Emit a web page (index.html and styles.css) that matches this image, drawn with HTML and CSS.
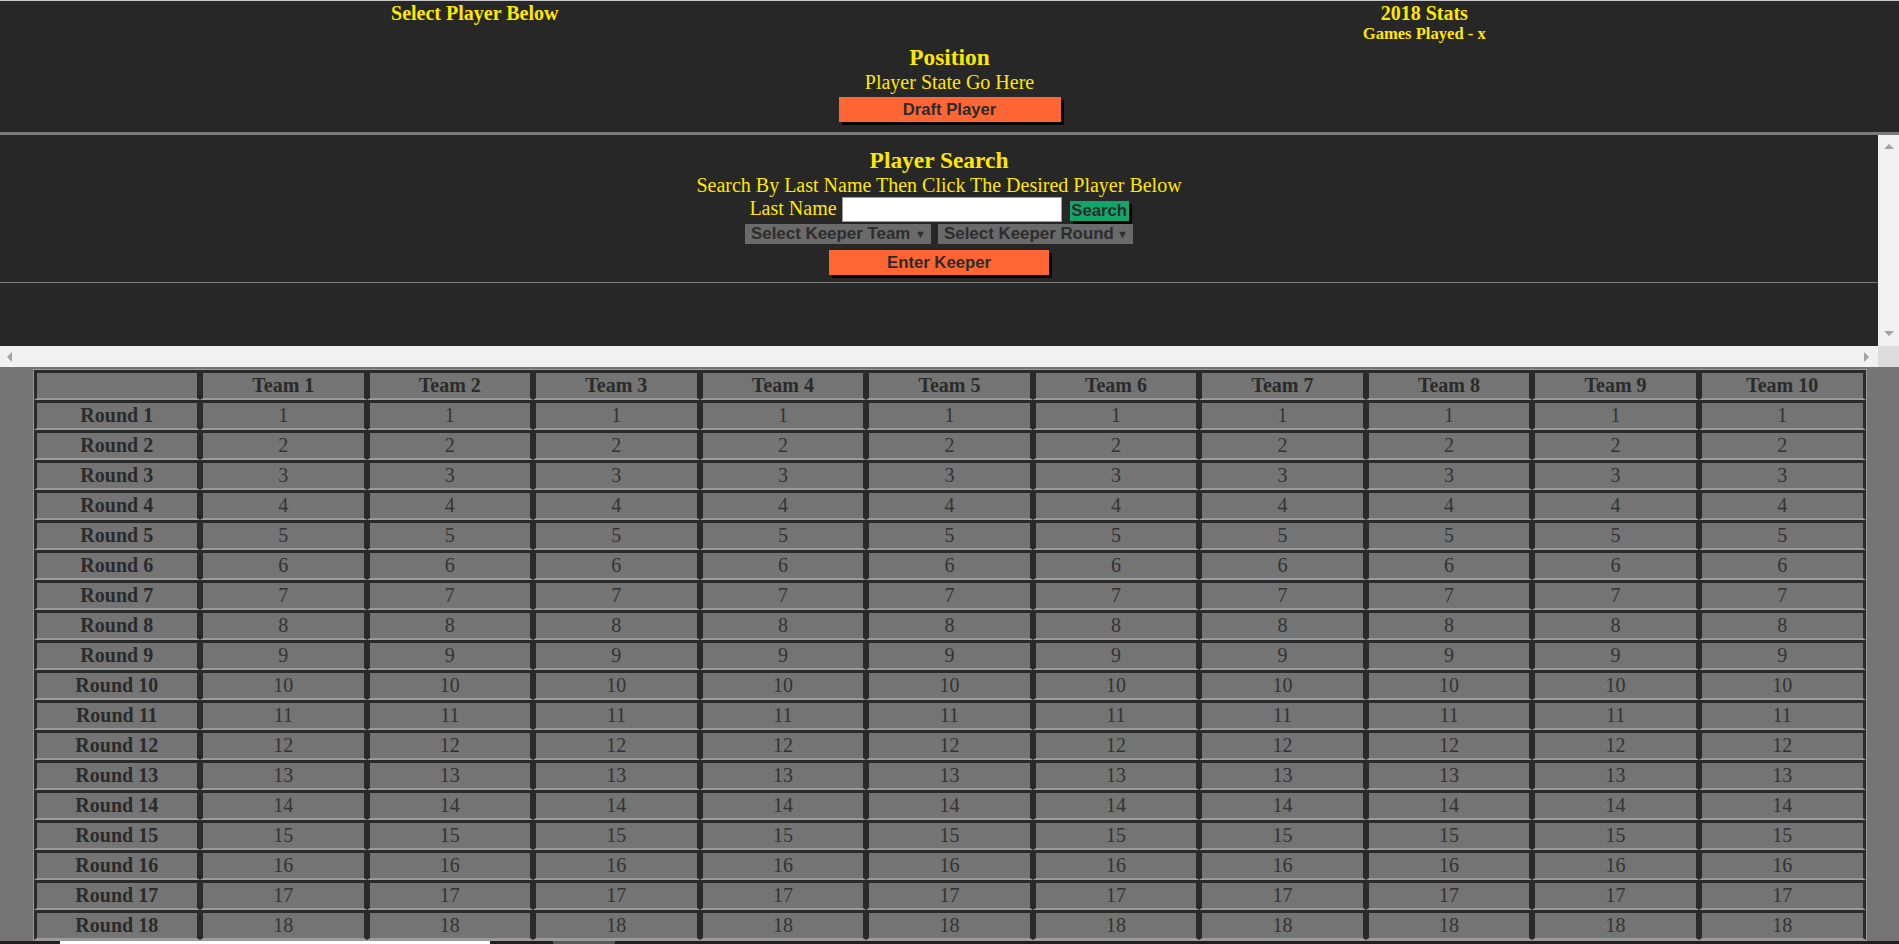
FILE: index.html
```html
<!DOCTYPE html>
<html>
<head>
<meta charset="utf-8">
<title>Draft</title>
<link rel="stylesheet" href="styles.css">
</head>
<body>
<div class="top">
  <div class="top-row">
    <div class="half"><div class="t-left">Select Player Below</div></div>
    <div class="half">
      <div class="stats">2018 Stats</div>
      <div class="games">Games Played - x</div>
    </div>
  </div>
  <div class="position">Position</div>
  <div class="state">Player State Go Here</div>
  <button class="btn btn-draft">Draft Player</button>
</div>

<div class="frame">
  <div class="frame-content">
    <div class="ps-title">Player Search</div>
    <div class="ps-sub">Search By Last Name Then Click The Desired Player Below</div>
    <div class="ps-row">
      <span class="ps-label">Last Name</span>
      <input class="ps-input" type="text">
      <button class="btn btn-search">Search</button>
    </div>
    <div class="sel-row">
      <div class="sel sel-team"><span>Select Keeper Team</span><span class="caret">&#9660;</span></div>
      <div class="sel sel-round"><span>Select Keeper Round</span><span class="caret">&#9660;</span></div>
    </div>
    <button class="btn btn-keeper">Enter Keeper</button>
    <div class="rule"></div>
  </div>
  <div class="vbar"><span class="arr arr-up"></span><span class="arr arr-down"></span></div>
  <div class="hbar"><span class="arr arr-left"></span><span class="arr arr-right"></span></div>
  <div class="corner"></div>
</div>

<div class="board">
  <table class="draft">
    <thead>
      <tr><th></th><th>Team 1</th><th>Team 2</th><th>Team 3</th><th>Team 4</th><th>Team 5</th><th>Team 6</th><th>Team 7</th><th>Team 8</th><th>Team 9</th><th>Team 10</th></tr>
    </thead>
    <tbody>
      <tr><th>Round 1</th><td>1</td><td>1</td><td>1</td><td>1</td><td>1</td><td>1</td><td>1</td><td>1</td><td>1</td><td>1</td></tr>
      <tr><th>Round 2</th><td>2</td><td>2</td><td>2</td><td>2</td><td>2</td><td>2</td><td>2</td><td>2</td><td>2</td><td>2</td></tr>
      <tr><th>Round 3</th><td>3</td><td>3</td><td>3</td><td>3</td><td>3</td><td>3</td><td>3</td><td>3</td><td>3</td><td>3</td></tr>
      <tr><th>Round 4</th><td>4</td><td>4</td><td>4</td><td>4</td><td>4</td><td>4</td><td>4</td><td>4</td><td>4</td><td>4</td></tr>
      <tr><th>Round 5</th><td>5</td><td>5</td><td>5</td><td>5</td><td>5</td><td>5</td><td>5</td><td>5</td><td>5</td><td>5</td></tr>
      <tr><th>Round 6</th><td>6</td><td>6</td><td>6</td><td>6</td><td>6</td><td>6</td><td>6</td><td>6</td><td>6</td><td>6</td></tr>
      <tr><th>Round 7</th><td>7</td><td>7</td><td>7</td><td>7</td><td>7</td><td>7</td><td>7</td><td>7</td><td>7</td><td>7</td></tr>
      <tr><th>Round 8</th><td>8</td><td>8</td><td>8</td><td>8</td><td>8</td><td>8</td><td>8</td><td>8</td><td>8</td><td>8</td></tr>
      <tr><th>Round 9</th><td>9</td><td>9</td><td>9</td><td>9</td><td>9</td><td>9</td><td>9</td><td>9</td><td>9</td><td>9</td></tr>
      <tr><th>Round 10</th><td>10</td><td>10</td><td>10</td><td>10</td><td>10</td><td>10</td><td>10</td><td>10</td><td>10</td><td>10</td></tr>
      <tr><th>Round 11</th><td>11</td><td>11</td><td>11</td><td>11</td><td>11</td><td>11</td><td>11</td><td>11</td><td>11</td><td>11</td></tr>
      <tr><th>Round 12</th><td>12</td><td>12</td><td>12</td><td>12</td><td>12</td><td>12</td><td>12</td><td>12</td><td>12</td><td>12</td></tr>
      <tr><th>Round 13</th><td>13</td><td>13</td><td>13</td><td>13</td><td>13</td><td>13</td><td>13</td><td>13</td><td>13</td><td>13</td></tr>
      <tr><th>Round 14</th><td>14</td><td>14</td><td>14</td><td>14</td><td>14</td><td>14</td><td>14</td><td>14</td><td>14</td><td>14</td></tr>
      <tr><th>Round 15</th><td>15</td><td>15</td><td>15</td><td>15</td><td>15</td><td>15</td><td>15</td><td>15</td><td>15</td><td>15</td></tr>
      <tr><th>Round 16</th><td>16</td><td>16</td><td>16</td><td>16</td><td>16</td><td>16</td><td>16</td><td>16</td><td>16</td><td>16</td></tr>
      <tr><th>Round 17</th><td>17</td><td>17</td><td>17</td><td>17</td><td>17</td><td>17</td><td>17</td><td>17</td><td>17</td><td>17</td></tr>
      <tr><th>Round 18</th><td>18</td><td>18</td><td>18</td><td>18</td><td>18</td><td>18</td><td>18</td><td>18</td><td>18</td><td>18</td></tr>
    </tbody>
  </table>
</div>

<div class="below"><div class="bar-w"></div><div class="bar-g"></div></div>
</body>
</html>
```

FILE: styles.css
```css
html {
  overflow: hidden;
}
body {
  margin: 0;
  background: #747474;
  font-family: "Liberation Serif", "Times New Roman", serif;
}

/* ---------- top panel ---------- */
.top {
  background: #272727;
  border-top: 1px solid #c8c8c8;
  border-bottom: 3px solid #7b7b7b;
  color: #ffe800;
  text-align: center;
  padding-bottom: 10px;
}
.top-row {
  display: flex;
}
.half {
  flex: 1;
}
.t-left {
  font-weight: bold;
  font-size: 20px;
  line-height: 24px;
}
.stats {
  font-weight: bold;
  font-size: 20px;
  line-height: 22px;
  margin-top: 1px;
}
.games {
  font-weight: bold;
  font-size: 16.6px;
  line-height: 20px;
}
.position {
  font-weight: bold;
  font-size: 23.4px;
  line-height: 27px;
}
.state {
  font-size: 20px;
  line-height: 23px;
}

.btn {
  display: block;
  border: 0;
  padding: 0;
  font-family: "Liberation Sans", Arial, sans-serif;
  font-weight: bold;
  font-size: 16.7px;
  color: #2b2b2b;
  box-shadow: 3px 3px 0 #000;
  cursor: pointer;
}
.btn-draft {
  width: 222px;
  height: 25px;
  margin: 3px auto 0;
  background: #ff6633;
}

/* ---------- framed search panel ---------- */
.frame {
  display: grid;
  grid-template-columns: 1fr 21px;
  grid-template-rows: 211px 21px;
  background: #272727;
}
.frame-content {
  overflow: hidden;
  text-align: center;
  color: #ffe800;
  padding-top: 11px;
}
.ps-title {
  font-weight: bold;
  font-size: 23.4px;
  line-height: 28px;
}
.ps-sub {
  font-size: 20px;
  line-height: 23px;
}
.ps-row {
  display: flex;
  justify-content: center;
  align-items: flex-start;
  height: 25px;
}
.ps-label {
  font-size: 20px;
  line-height: 23px;
  margin-right: 5px;
}
.ps-input {
  box-sizing: border-box;
  width: 220px;
  height: 25px;
  margin: 0;
  border: 1px solid #9a9a9a;
  background: #fff;
  padding: 0 2px;
}
.btn-search {
  width: 59px;
  height: 20px;
  margin-top: 4px;
  margin-left: 8px;
  background: #13a66b;
  line-height: 20px;
}
.sel-row {
  display: flex;
  justify-content: center;
  gap: 7px;
  margin-top: 2px;
}
.sel {
  box-sizing: border-box;
  height: 20px;
  display: flex;
  justify-content: space-between;
  align-items: center;
  padding: 0 5px 0 6px;
  background: #6a6a6a;
  color: #2d2d2d;
  font-family: "Liberation Sans", Arial, sans-serif;
  font-weight: bold;
  font-size: 16.9px;
}
.sel-team {
  width: 186px;
}
.sel-round {
  width: 195px;
}
.caret {
  font-size: 11px;
}
.btn-keeper {
  width: 220px;
  height: 25px;
  margin: 6px auto 0;
  background: #ff6633;
}
.rule {
  height: 1px;
  background: #7a7a7a;
  margin-top: 7px;
}

/* fake scrollbars */
.vbar {
  background: #f1f1f1;
  display: flex;
  flex-direction: column;
  justify-content: space-between;
  align-items: center;
  padding: 9px 0 10px;
}
.hbar {
  background: #f1f1f1;
  display: flex;
  justify-content: space-between;
  align-items: center;
  padding: 0 9px 0 7px;
}
.corner {
  background: #dcdcdc;
}
.arr {
  width: 0;
  height: 0;
}
.arr-up {
  border-left: 5px solid transparent;
  border-right: 5px solid transparent;
  border-bottom: 5px solid #a3a3a3;
}
.arr-down {
  border-left: 5px solid transparent;
  border-right: 5px solid transparent;
  border-top: 5px solid #a3a3a3;
}
.arr-left {
  border-top: 5px solid transparent;
  border-bottom: 5px solid transparent;
  border-right: 5px solid #a3a3a3;
}
.arr-right {
  border-top: 5px solid transparent;
  border-bottom: 5px solid transparent;
  border-left: 5px solid #a3a3a3;
}

/* ---------- draft board ---------- */
.board {
  background: #747474;
  padding-top: 2px;
}
.draft {
  width: 1834px;
  margin: 0 auto;
  table-layout: fixed;
  border-collapse: separate;
  border-spacing: 0;
  border: 1px solid #9a9a9a;
  color: #2b2b2b;
}
.draft th,
.draft td {
  border-style: solid;
  border-width: 3px 3px 2px 3px;
  border-color: #2a2a2a #2a2a2a #9a9a9a #2a2a2a;
  padding: 1px;
  font-size: 20px;
  line-height: 23px;
  text-align: center;
  background: #747474;
}
.draft th {
  font-weight: bold;
}
.draft td {
  font-weight: normal;
  color: #333;
}

.below {
  display: flex;
  height: 30px;
  background: #231d1d;
}
.bar-w {
  width: 430px;
  margin-left: 60px;
  background: #fff;
}
.bar-g {
  width: 62px;
  margin-left: 63px;
  background: #5a5a5a;
}
```
